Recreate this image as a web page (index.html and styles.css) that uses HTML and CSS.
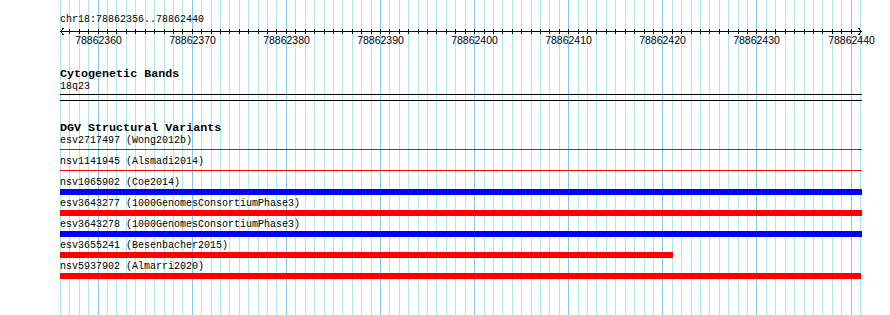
FILE: index.html
```html
<!DOCTYPE html>
<html lang="en">
<head>
    <meta charset="UTF-8">
    <meta name="viewport" content="width=device-width, initial-scale=1.0">
    <title>chr18:78862356..78862440</title>
    <link rel="stylesheet" href="styles.css">
</head>
<body>
    <div class="view">
        <div class="grid" id="grid"></div>

        <div class="tracks">
            <div class="ruler">
                <div class="ruler-title">chr18:78862356..78862440</div>
                <svg class="ruler-axis" id="axis" width="806" height="10"></svg>
                <div class="ruler-labels" id="labels"></div>
            </div>

            <div class="track cyto">
                <div class="track-name">Cytogenetic Bands</div>
                <div class="label">18q23</div>
                <div class="band"></div>
            </div>

            <div class="track dgv">
                <div class="track-name">DGV Structural Variants</div>

                <div class="feature">
                    <div class="label">esv2717497 (Wong2012b)</div>
                    <div class="line red"></div>
                </div>
                <div class="feature">
                    <div class="label">nsv1141945 (Alsmadi2014)</div>
                    <div class="line red"></div>
                </div>
                <div class="feature">
                    <div class="label">nsv1065902 (Coe2014)</div>
                    <div class="bar blue"></div>
                </div>
                <div class="feature">
                    <div class="label">esv3643277 (1000GenomesConsortiumPhase3)</div>
                    <div class="bar red"></div>
                </div>
                <div class="feature">
                    <div class="label">esv3643278 (1000GenomesConsortiumPhase3)</div>
                    <div class="bar blue"></div>
                </div>
                <div class="feature">
                    <div class="label">esv3655241 (Besenbacher2015)</div>
                    <div class="bar red short"></div>
                </div>
                <div class="feature">
                    <div class="label">nsv5937902 (Almarri2020)</div>
                    <div class="bar red last"></div>
                </div>
            </div>
        </div>
    </div>

    <script src="script.js"></script>
</body>
</html>
```

FILE: styles.css
```css
body {
    margin: 0;
    background: #fff;
    font-family: 'Liberation Mono', monospace;
    font-size: 10px;
    color: #000;
}
.view {
    position: relative;
    width: 890px;
    height: 315px;
    overflow: hidden;
}
.grid {
    position: absolute;
    top: 0;
    left: 60px;
    width: 802px;
    height: 315px;
}
.gridline {
    position: absolute;
    top: 0;
    width: 1px;
    height: 100%;
    background: #ace8f0;
}
.gridline.major {
    background: #84c6ee;
}
.tracks {
    position: relative;
    padding-left: 60px;
}
.ruler {
    padding-top: 14px;
}
.ruler-title {
    line-height: 12px;
}
.ruler-axis {
    display: block;
    shape-rendering: crispEdges;
}
.ruler-labels {
    position: relative;
    height: 12px;
    margin-top: -2px;
    font-family: 'Liberation Sans', sans-serif;
    font-size: 10.5px;
    line-height: 12px;
}
.ruler-labels span {
    position: absolute;
    top: 0;
    transform: translateX(-50%);
}
.track-name {
    font-weight: bold;
    font-size: 11.7px;
    line-height: 13px;
}
.cyto {
    margin-top: 22px;
}
.label {
    line-height: 12px;
    white-space: nowrap;
}
.band {
    width: 802px;
    height: 5px;
    margin-top: 1px;
    border-top: 1px solid #000;
    border-bottom: 1px solid #000;
}
.dgv {
    margin-top: 21px;
}
.feature {
    height: 21px;
}
.line {
    width: 802px;
    height: 1px;
    margin-top: 2px;
}
.bar {
    width: 802px;
    height: 6px;
}
.bar.short {
    width: 613px;
}
.bar.last {
    width: 801px;
}
.red {
    background: #ff0000;
}
.blue {
    background: #0000ff;
}
```

FILE: script.js
```js
// grid lines + ruler for chr18:78862356..78862440
const start = 78862356;
const bases = 85;
const pxPerBase = 800 / bases;

const grid = document.getElementById("grid");
const axis = document.getElementById("axis");
const labels = document.getElementById("labels");

let svg = '<line x1="0" y1="5.5" x2="802" y2="5.5" stroke="#000"/>';
svg += '<polyline points="3.5,2 0.5,5.5 3.5,9" fill="none" stroke="#000"/>';
svg += '<polyline points="798.5,2 801.5,5.5 798.5,9" fill="none" stroke="#000"/>';

for (let i = 0; i <= bases; i++) {
    const x = Math.round(i * pxPerBase);
    const pos = start + i;
    const major = pos % 10 === 0;

    const line = document.createElement("div");
    line.className = major ? "gridline major" : "gridline";
    line.style.left = x + "px";
    grid.appendChild(line);

    if (i > 0 && i < bases) {
        svg += '<line x1="' + (x + 0.5) + '" y1="3" x2="' + (x + 0.5) + '" y2="8" stroke="#000"/>';
    }

    if (major) {
        const label = document.createElement("span");
        label.textContent = pos;
        label.style.left = (x + 0.5) + "px";
        labels.appendChild(label);
    }
}

axis.innerHTML = svg;
```
